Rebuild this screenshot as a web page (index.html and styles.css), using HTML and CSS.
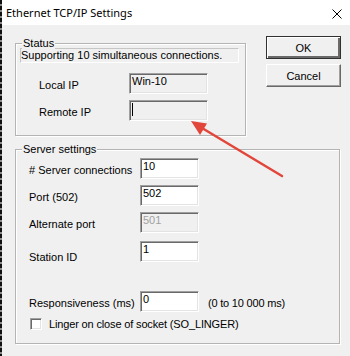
FILE: index.html
```html
<!DOCTYPE html>
<html lang="en">
<head>
  <meta charset="UTF-8">
  <title>Ethernet TCP/IP Settings</title>
  <link rel="stylesheet" href="styles.css">
</head>
<body>
  <div class="screen">
    <div class="edge"></div>
    <div class="window">
      <div class="titlebar">
        <span class="title">Ethernet TCP/IP Settings</span>
        <svg class="close" width="10" height="10" viewBox="0 0 10 10">
          <path d="M0.5 0.5 L9.5 9.5 M9.5 0.5 L0.5 9.5" stroke="#000" stroke-width="1" fill="none"/>
        </svg>
      </div>

      <div class="dialog">
        <div class="top">
          <div class="group status">
            <span class="legend">Status</span>
            <div class="support">Supporting 10 simultaneous connections.</div>
            <div class="ip-rows">
              <label class="lbl">Local IP</label>
              <div class="field readonly">Win-10</div>
              <label class="lbl">Remote IP</label>
              <div class="field readonly"><span class="caret"></span></div>
            </div>
          </div>

          <div class="buttons">
            <button class="btn default">OK</button>
            <button class="btn">Cancel</button>
          </div>
        </div>

        <div class="group server">
          <span class="legend">Server settings</span>
          <div class="row">
            <label class="lbl">#&nbsp;Server connections</label>
            <div class="field">10</div>
          </div>
          <div class="row">
            <label class="lbl">Port (502)</label>
            <div class="field">502</div>
          </div>
          <div class="row">
            <label class="lbl">Alternate port</label>
            <div class="field disabled">501</div>
          </div>
          <div class="row row-station">
            <label class="lbl lbl-low">Station ID</label>
            <div class="field">1</div>
          </div>
          <div class="row">
            <label class="lbl">Responsiveness (ms)</label>
            <div class="field">0</div>
            <span class="note">(0 to 10 000 ms)</span>
          </div>
          <div class="check-row">
            <span class="checkbox"></span>
            <label>Linger on close of socket (SO_LINGER)</label>
          </div>
        </div>
      </div>
    </div>

    <!-- red annotation arrow pointing at the Remote IP box -->
    <svg class="arrow" width="350" height="356" viewBox="0 0 350 356">
      <line x1="282" y1="176" x2="202" y2="128" stroke="#e2463b" stroke-width="2.5" stroke-linecap="round"/>
      <polygon points="191,121 207,123.5 200,135" fill="#e2463b"/>
    </svg>
  </div>
</body>
</html>
```

FILE: styles.css
```css
body {
  margin: 0;
  font-family: "Liberation Sans", Arial, sans-serif;
  font-size: 11px;
  color: #000;
  background: #f0f0f0;
}
.screen {
  position: relative;
  display: flex;
  width: 350px;
  height: 356px;
  overflow: hidden;
}
.edge {
  width: 2px;
  background: repeating-linear-gradient(to bottom, #111 0 4px, #8a8a8a 4px 6px);
}
.window {
  flex: 1;
  background: #f0f0f0;
}
.titlebar {
  height: 25px;
  background: #fff;
  display: flex;
  align-items: center;
  justify-content: space-between;
  padding: 0 8px 0 4px;
}
.title {
  font-family: "Noto Sans", sans-serif;
  font-size: 11px;
}
.close {
  margin-top: 2px;
}
.dialog {
  padding-left: 13px;
}
.top {
  display: flex;
  align-items: flex-start;
}
.group {
  position: relative;
  box-sizing: border-box;
  border: 1px solid #b4b4b4;
  box-shadow: inset 1px 1px #fff, 1px 1px #fff;
}
.legend {
  position: absolute;
  top: -7px;
  left: 6px;
  padding: 0 1px;
  line-height: 13px;
  background: #f0f0f0;
}
.status {
  width: 231px;
  height: 93px;
  margin-top: 18px;
  padding: 4px 0 0 4px;
}
.support {
  box-sizing: border-box;
  width: 219px;
  height: 15px;
  border: 1px solid;
  border-color: #c6c6c6 #fff #fff #c6c6c6;
  line-height: 13px;
}
.ip-rows {
  display: grid;
  grid-template-columns: 90px 79px;
  row-gap: 6px;
  margin-top: 10px;
  padding-left: 19px;
}
.lbl {
  align-self: center;
  padding-top: 3px;
}
.field {
  box-sizing: border-box;
  height: 21px;
  background: #fff;
  border: 1px solid;
  border-color: #a0a0a0 #fff #fff #a0a0a0;
  box-shadow: inset 1px 1px #696969, inset -1px -1px #e3e3e3;
  padding: 1px 2px 0;
  line-height: 13px;
}
.readonly {
  background: #f0f0f0;
}
.disabled {
  background: #f0f0f0;
  color: #a0a0a0;
}
.caret {
  display: inline-block;
  width: 1px;
  height: 13px;
  margin-top: 1px;
  background: #000;
}
.buttons {
  display: flex;
  flex-direction: column;
  gap: 5px;
  margin: 11px 0 0 20px;
}
.btn {
  width: 75px;
  height: 23px;
  padding: 0;
  font: inherit;
  background: #f0f0f0;
  border: 1px solid;
  border-color: #fff #696969 #696969 #fff;
  box-shadow: inset -1px -1px #a0a0a0;
}
.btn.default {
  border-color: #303030;
  box-shadow: inset 1px 1px #fff, inset -2px -2px #696969;
}
.server {
  width: 325px;
  height: 195px;
  margin-top: 13px;
  padding: 8px 0 0 13px;
}
.row {
  display: grid;
  grid-template-columns: 111px 59px auto;
  margin-bottom: 6px;
}
.row:nth-child(4) {
  margin-bottom: 8px;
}
.row-station {
  margin-bottom: 28px;
}
.lbl-low {
  padding-top: 10px;
}
.note {
  align-self: center;
  padding: 3px 0 0 9px;
  letter-spacing: -0.2px;
}
.check-row {
  display: flex;
  align-items: center;
  gap: 7px;
  margin: 6px 0 0 1px;
  letter-spacing: -0.15px;
}
.checkbox {
  box-sizing: border-box;
  width: 12px;
  height: 12px;
  background: #fff;
  border: 1px solid;
  border-color: #a0a0a0 #fff #fff #a0a0a0;
  box-shadow: inset 1px 1px #696969, inset -1px -1px #e3e3e3;
}
.arrow {
  position: absolute;
  top: 0;
  left: 0;
  pointer-events: none;
}
```
